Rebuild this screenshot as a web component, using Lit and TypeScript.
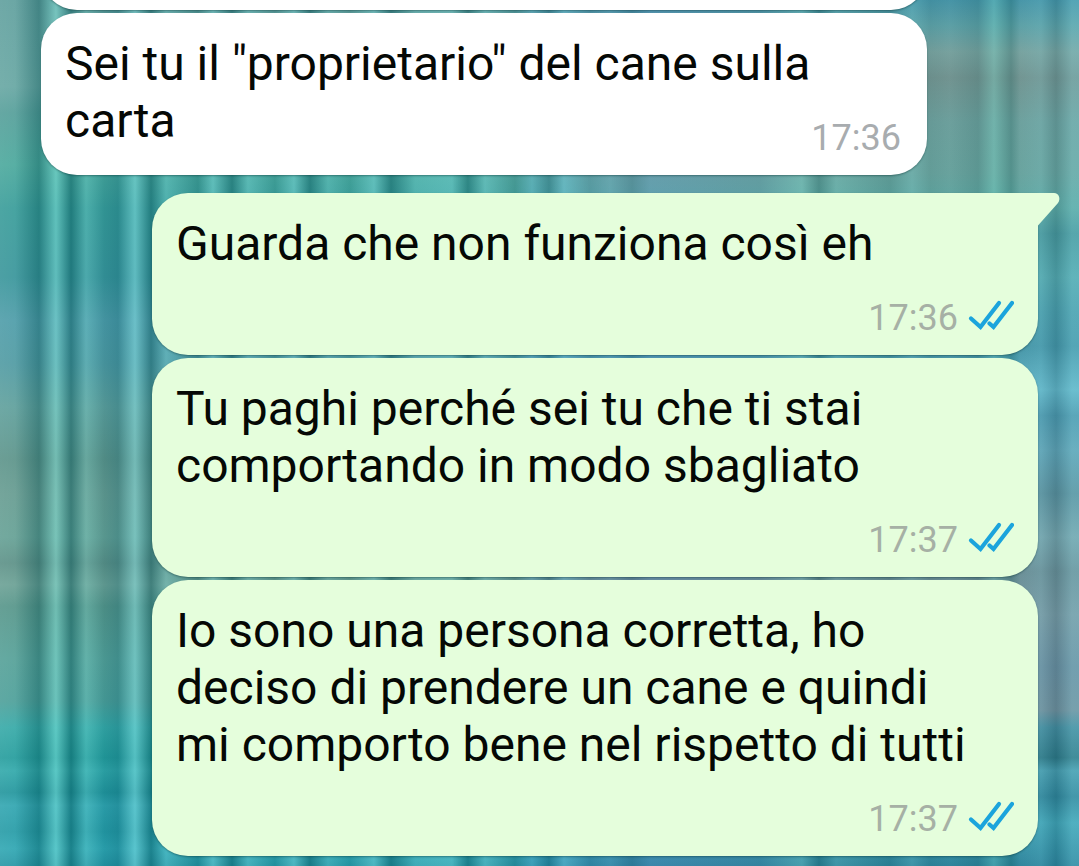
import { LitElement, html, css, svg, nothing } from "lit";
import { customElement, property } from "lit/decorators.js";
import { classMap } from "lit/directives/class-map.js";

interface Message {
  text: string;
  time: string;
  outgoing: boolean;
  first?: boolean;
  inlineTime?: boolean;
}

const messages: Message[] = [
  { text: 'Sei tu il "proprietario" del cane sulla carta', time: "17:36", outgoing: false, inlineTime: true },
  { text: "Guarda che non funziona così eh", time: "17:36", outgoing: true, first: true },
  { text: "Tu paghi perché sei tu che ti stai comportando in modo sbagliato", time: "17:37", outgoing: true },
  { text: "Io sono una persona corretta, ho deciso di prendere un cane e quindi mi comporto bene nel rispetto di tutti", time: "17:37", outgoing: true },
];

@customElement("read-ticks")
export class ReadTicks extends LitElement {
  static styles = css`
    :host { display: block; width: 46px; height: 36px; }
    .ticks { display: block; width: 100%; height: 100%; }
  `;

  render() {
    return html`<svg class="ticks" viewBox="0 0 46 36" role="img" aria-label="Letto">
      ${svg`<g fill="none" stroke="#1ba4dc" stroke-width="4.2" stroke-linejoin="miter" stroke-linecap="round">
        <path d="M3 18.500 L12.500 27 L31 3"/>
        <path d="M21.500 23.500 L25.500 27 L44 3"/>
      </g>`}
    </svg>`;
  }
}

@customElement("chat-bubble")
export class ChatBubble extends LitElement {
  @property({ attribute: false }) message!: Message;

  static styles = css`
    :host { display: block; }
    .bubble {
      position: relative;
      box-sizing: border-box;
      padding: 22px 24px 16px;
      border-radius: 36px;
      background: #fff;
      box-shadow: 0 1px 2px rgba(0, 40, 40, 0.4);
    }
    .outgoing { background: #e5fedc; }
    .first { border-top-right-radius: 0; }
    .text { margin: 0; padding-right: 24px; font-size: 48px; line-height: 57px; color: #050805; }
    .meta {
      display: flex;
      justify-content: flex-end;
      align-items: center;
      gap: 10px;
      margin-top: 25px;
      font-size: 36px;
      line-height: 42px;
      color: #a8acaf;
    }
    .outgoing .meta { color: #a6b0a5; }
    .tucked { margin-top: -32px; padding-right: 2px; }
    .tail {
      position: absolute;
      top: 0;
      left: calc(100% - 1px);
      width: 24px;
      height: 34px;
      fill: #e5fedc;
    }
  `;

  render() {
    const m = this.message;
    return html`<article class=${classMap({ bubble: true, outgoing: m.outgoing, first: !!m.first })}>
      ${m.first
        ? html`<svg class="tail" viewBox="0 0 24 34" aria-hidden="true"><path d="M0 0H17C22 0 24 6 21 10L1 32.500V34H0Z"/></svg>`
        : nothing}
      <p class="text">${m.text}</p>
      <div class=${classMap({ meta: true, tucked: !!m.inlineTime })}>
        <time>${m.time}</time>
        ${m.outgoing ? html`<read-ticks></read-ticks>` : nothing}
      </div>
    </article>`;
  }
}

@customElement("app-root")
export class AppRoot extends LitElement {
  static styles = css`
    :host {
      display: block;
      font-family: Roboto, "Noto Sans", sans-serif;
    }
    .chat {
      position: relative;
      isolation: isolate;
      overflow: hidden;
      box-sizing: border-box;
      min-height: 100vh;
      padding: 0 41px 10px;
      display: flex;
      flex-direction: column;
      gap: 3px;
      background: linear-gradient(
        #5f9f9d 0, #66a6a2 10%, #549e99 13%, #4aa89c 19%, #389c99 24%, #38959a 32%,
        #4d9ca8 37%, #4f9aa2 42%, #5e9f9b 47%, #5b9389 53%, #659b90 57%, #64a094 62%, #5b9086 65%,
        #6aa094 67.500%, #559589 70%, #54a097 76%, #4c9f99 81%, #35a9a7 84%, #249c9c 87.500%,
        #30a8aa 89%, #21959c 91.500%, #30a5b0 93%, #259ba6 96%, #2ea6b2 98%, #2596a4 100%
      );
    }
    .chat::before, .chat::after {
      content: "";
      position: absolute;
      inset: 0;
      z-index: -1;
    }
    .chat::before {
      background: linear-gradient(
        #4592a5 0, #5c9ea4 3%, #77a09d 6%, #71928f 9%, #6c9e9b 14%, #68a19c 20%, #5ca5a0 24%,
        #489499 27%, #54a5ab 32%, #4a9aa8 36%, #4593a5 40%, #62b2c4 45%, #4c94a9 48%,
        #5f9fb1 52%, #5a8c99 57%, #75a0a8 62%, #6a8c94 66%, #7796a0 71%, #6a8b9c 77%, #6f8c99 82%,
        #43889a 84%, #2d7482 87.500%, #4698aa 89%, #2f8196 92%, #40a0b2 95%, #2d829a 100%
      );
      -webkit-mask-image: linear-gradient(90deg, transparent 42%, #000 58%);
      mask-image: linear-gradient(90deg, transparent 42%, #000 58%);
    }
    .chat::after {
      background: linear-gradient(
        90deg,
        rgba(255, 255, 255, 0.1) 0, rgba(255, 255, 255, 0.08) 15px, rgba(0, 70, 75, 0.3) 39px,
        rgba(150, 245, 235, 0.42) 56px, rgba(0, 80, 85, 0.42) 71px, rgba(150, 240, 235, 0.22) 86px,
        rgba(0, 80, 100, 0.12) 104px, rgba(0, 80, 100, 0.24) 118px, rgba(150, 240, 245, 0.42) 135px,
        rgba(0, 75, 85, 0.38) 151px, rgba(150, 240, 245, 0.24) 166px, rgba(0, 75, 85, 0.2) 198px,
        rgba(150, 240, 245, 0.34) 213px, rgba(0, 75, 85, 0.38) 232px, rgba(150, 240, 245, 0.28) 248px,
        rgba(0, 75, 85, 0.1) 275px, rgba(150, 240, 245, 0.34) 294px, rgba(0, 75, 85, 0.38) 310px,
        rgba(150, 240, 245, 0.2) 328px, rgba(0, 75, 85, 0.06) 350px, rgba(150, 240, 245, 0.35) 374px,
        rgba(0, 75, 85, 0.38) 391px, rgba(150, 240, 245, 0.22) 415px, rgba(150, 240, 245, 0.3) 452px,
        rgba(0, 75, 85, 0.32) 468px, rgba(150, 240, 245, 0.3) 485px, rgba(0, 75, 85, 0.12) 515px,
        rgba(120, 210, 255, 0.25) 532px, rgba(0, 70, 110, 0.25) 549px, rgba(130, 220, 255, 0.35) 564px,
        rgba(60, 110, 180, 0.16) 590px, rgba(120, 180, 240, 0.2) 610px, rgba(40, 90, 140, 0.25) 632px,
        rgba(100, 150, 220, 0.25) 650px, rgba(80, 130, 180, 0.16) 760px, rgba(150, 240, 230, 0.25) 802px,
        rgba(0, 70, 70, 0.22) 819px, rgba(150, 240, 230, 0.16) 836px, rgba(0, 70, 70, 0.1) 890px,
        rgba(150, 240, 240, 0.16) 912px, rgba(0, 70, 70, 0.05) 930px, rgba(150, 240, 240, 0.02) 950px,
        rgba(0, 70, 70, 0.12) 978px, rgba(130, 240, 220, 0.25) 994px, rgba(0, 80, 75, 0.2) 1011px,
        rgba(150, 240, 240, 0.04) 1020px, rgba(150, 240, 250, 0.12) 1041px, rgba(0, 60, 75, 0.14) 1056px,
        rgba(150, 240, 250, 0.2) 1072px
      );
    }
    .incoming { margin-right: 111px; }
    .outgoing { margin-left: 111px; }
    .turn { margin-top: 15px; }
    .previous {
      height: 72px;
      margin-top: -62px;
      border-radius: 36px;
      background: #fff;
      box-shadow: 0 1px 2px rgba(0, 40, 40, 0.4);
    }
  `;

  render() {
    return html`<main class="chat">
      <div class="previous incoming"></div>
      ${messages.map(
        (m) => html`<chat-bubble
          class=${classMap({ incoming: !m.outgoing, outgoing: m.outgoing, turn: !!m.first })}
          .message=${m}
        ></chat-bubble>`,
      )}
    </main>`;
  }
}
